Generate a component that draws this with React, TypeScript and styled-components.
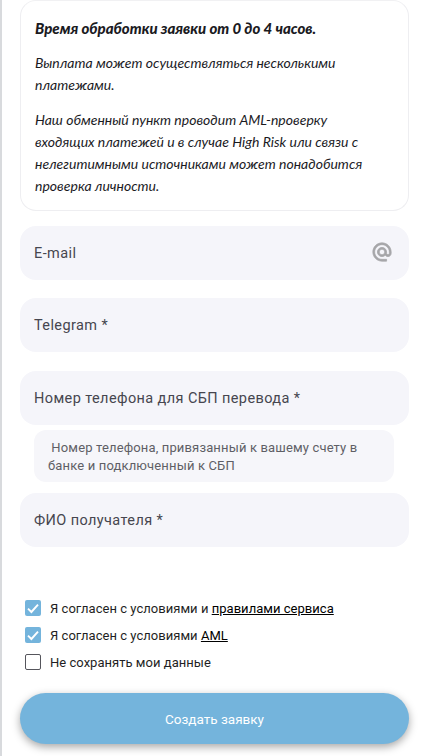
import React from 'react';
import styled, { createGlobalStyle } from 'styled-components';

const GlobalStyle = createGlobalStyle`
  html, body {
    margin: 0;
    padding: 0;
    height: 100%;
    overflow: hidden;
    background: #fff;
    font-family: Roboto, "Liberation Sans", sans-serif;
  }
`;

const AtIcon = () => (
  <svg width="22" height="22" viewBox="0 0 24 24" fill="#a6a6a9" stroke="#a6a6a9" strokeWidth="0.8">
    <path d="M12 2C6.48 2 2 6.48 2 12s4.48 10 10 10h5v-2h-5c-4.34 0-8-3.66-8-8s3.66-8 8-8 8 3.66 8 8v1.43c0 .79-.71 1.57-1.5 1.57s-1.5-.78-1.5-1.57V12c0-2.76-2.24-5-5-5s-5 2.24-5 5 2.24 5 5 5c1.38 0 2.64-.56 3.54-1.47.65.89 1.77 1.47 2.96 1.47 1.97 0 3.5-1.6 3.5-3.57V12c0-5.52-4.48-10-10-10zm0 13c-1.66 0-3-1.34-3-3s1.34-3 3-3 3 1.34 3 3-1.34 3-3 3z" />
  </svg>
);

const CheckMark = () => (
  <svg width="16" height="16" viewBox="0 0 16 16" fill="none">
    <path d="M3 8.6 L6.4 12 L13 4.6" stroke="#fff" strokeWidth="1.9" />
  </svg>
);

const App = () => {
  return (
    <Page>
      <GlobalStyle />
      <InfoCard>
        <InfoText $bold>Время обработки заявки от 0 до 4 часов.</InfoText>
        <InfoText>Выплата может осуществляться несколькими платежами.</InfoText>
        <InfoText>
          Наш обменный пункт проводит AML-проверку входящих платежей и в случае High Risk или связи с
          нелегитимными источниками может понадобится проверка личности.
        </InfoText>
      </InfoCard>

      <Field $top={15}>
        <span>E-mail</span>
        <IconSlot><AtIcon /></IconSlot>
      </Field>
      <Field $top={18}>Telegram *</Field>
      <Field $top={19}>Номер телефона для СБП перевода *</Field>
      <Hint>
        &nbsp;Номер телефона, привязанный к вашему счету в банке и подключенный к СБП
      </Hint>
      <Field $top={11}>ФИО получателя *</Field>

      <Checks>
        <CheckRow>
          <CheckBox $checked><CheckMark /></CheckBox>
          <span>Я согласен с условиями и <CheckLink>правилами сервиса</CheckLink></span>
        </CheckRow>
        <CheckRow>
          <CheckBox $checked><CheckMark /></CheckBox>
          <span>Я согласен с условиями <CheckLink>AML</CheckLink></span>
        </CheckRow>
        <CheckRow>
          <CheckBox />
          <span>Не сохранять мои данные</span>
        </CheckRow>
      </Checks>

      <SubmitButton>Создать заявку</SubmitButton>
    </Page>
  );
};

export default App;

const Page = styled.div`
  box-sizing: border-box;
  width: 424px;
  height: 756px;
  overflow: hidden;
  padding: 0 15px 0 18px;
  border-left: 2px solid #d8dadd;
  display: flex;
  flex-direction: column;
`;

const InfoCard = styled.div`
  box-sizing: border-box;
  width: 389px;
  height: 211px;
  flex: none;
  padding: 16px 30px 16px 14px;
  border: 1px solid #eeeef1;
  border-top-color: #f1f1f3;
  border-radius: 16px;
  display: flex;
  flex-direction: column;
  gap: 13px;
`;

const InfoText = styled.div<{ $bold?: boolean }>`
  font-family: Lato, "Open Sans", sans-serif;
  font-style: italic;
  font-size: ${(p) => (p.$bold ? 15 : 14)}px;
  line-height: 22px;
  color: #1b1b1f;
  font-weight: ${(p) => (p.$bold ? 900 : 400)};
`;

const Field = styled.div<{ $top: number }>`
  box-sizing: border-box;
  width: 389px;
  height: 54px;
  flex: none;
  margin-top: ${(p) => p.$top}px;
  padding: 0 14px;
  background: #f5f5fa;
  border-radius: 16px;
  display: flex;
  align-items: center;
  justify-content: space-between;
  font-size: 14.5px;
  letter-spacing: 0.4px;
  color: #46464f;
`;

const IconSlot = styled.span`
  display: flex;
  margin: -3px 2px 0 0;
`;

const Hint = styled.div`
  box-sizing: border-box;
  width: 360px;
  height: 52px;
  flex: none;
  margin: 5px 0 0 14px;
  padding: 9px 14px;
  background: #f6f6fa;
  border-radius: 12px;
  font-size: 13px;
  letter-spacing: 0.15px;
  line-height: 18px;
  color: #5f5f66;
`;

const Checks = styled.div`
  margin: 53px 0 0 5px;
  display: flex;
  flex-direction: column;
  gap: 11px;
`;

const CheckRow = styled.div`
  display: flex;
  align-items: center;
  gap: 9px;
  height: 16px;
  font-size: 13px;
  letter-spacing: 0.03px;
  color: #1f1f24;
`;

const CheckBox = styled.span<{ $checked?: boolean }>`
  box-sizing: border-box;
  width: 16px;
  height: 16px;
  flex: none;
  border-radius: 2px;
  background: ${(p) => (p.$checked ? '#74b4dc' : '#fff')};
  border: ${(p) => (p.$checked ? 'none' : '1px solid #55555c')};
`;

const CheckLink = styled.a`
  color: #000;
  text-decoration: underline;
`;

const SubmitButton = styled.button`
  width: 389px;
  height: 51px;
  flex: none;
  margin-top: 23px;
  border: none;
  border-radius: 26px;
  background: #74b4dc;
  box-shadow: 0 3px 8px rgba(0, 0, 0, 0.35);
  color: #fff;
  font-family: Roboto, "Liberation Sans", sans-serif;
  font-size: 13.5px;
`;
